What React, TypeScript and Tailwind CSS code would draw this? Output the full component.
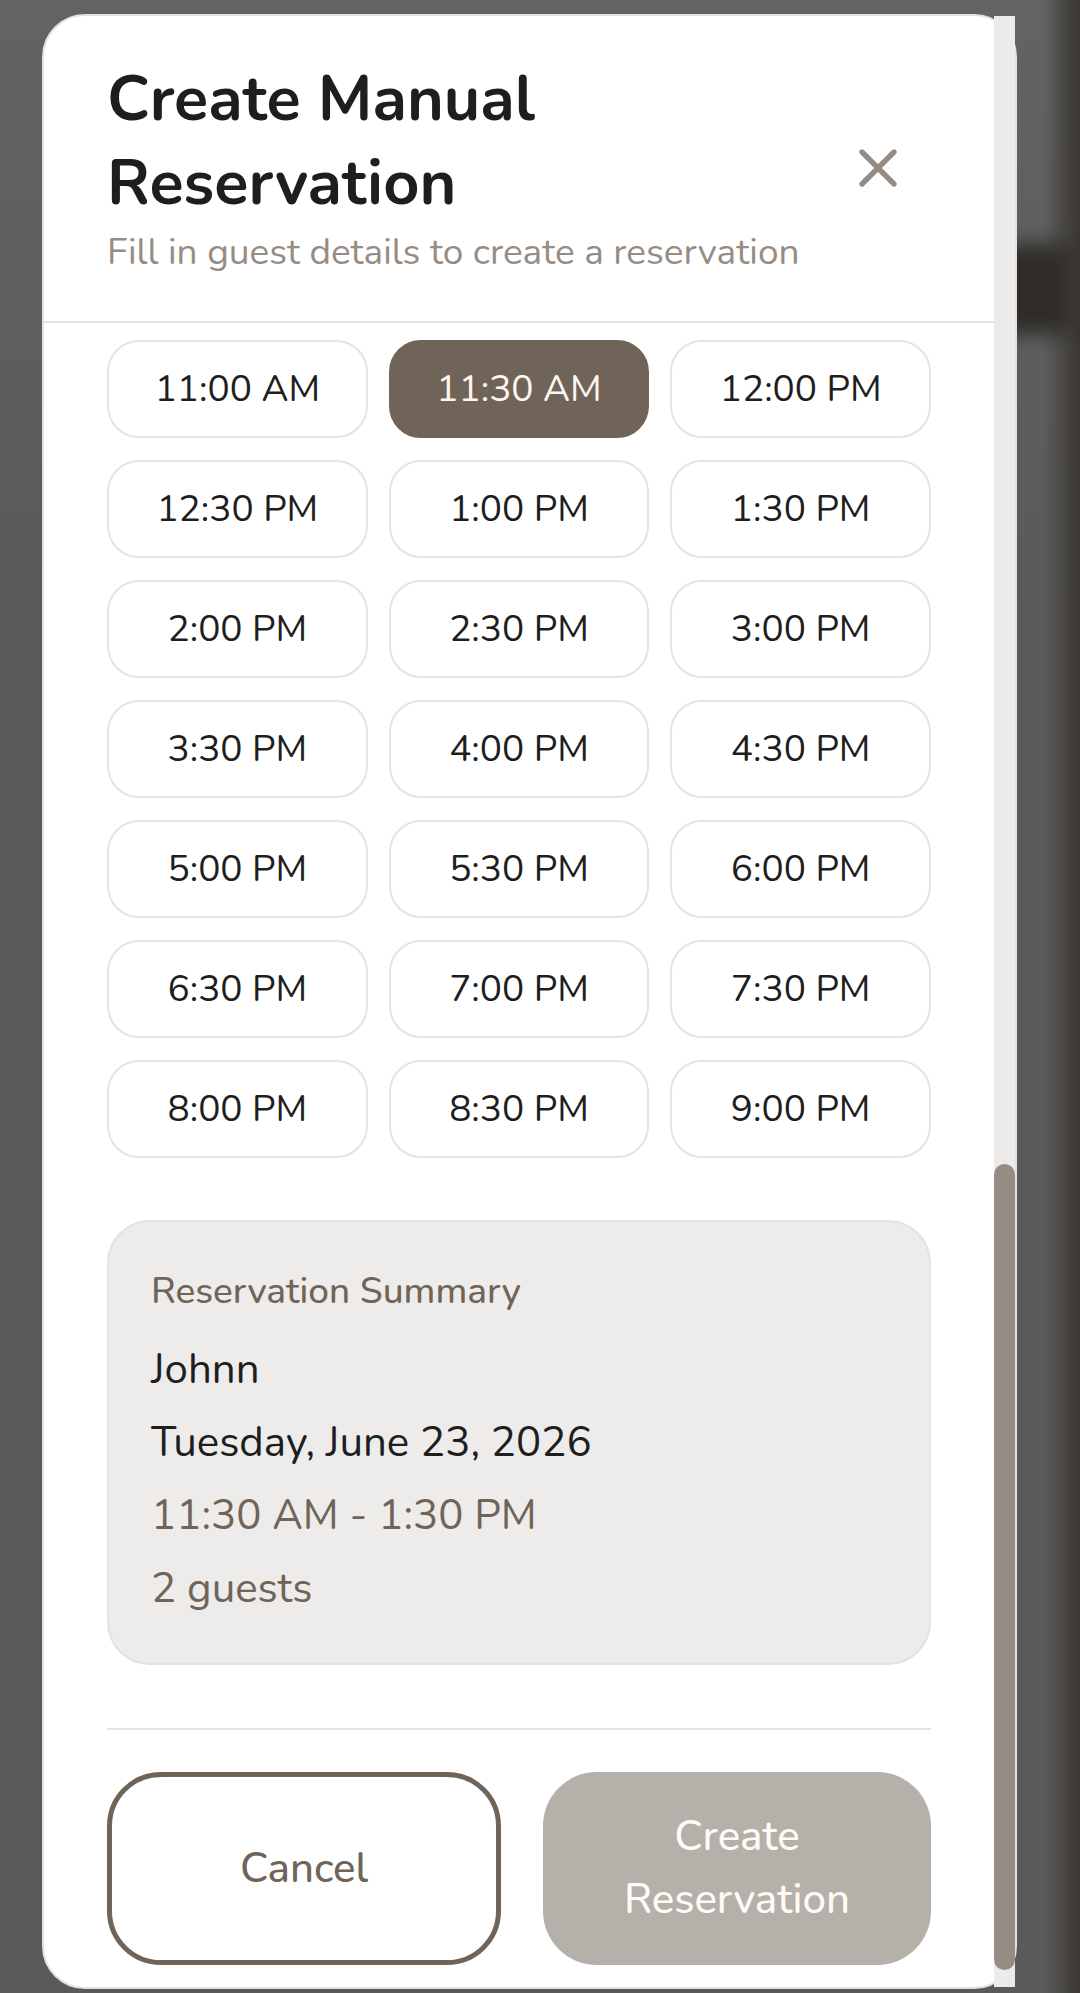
import React, { useState } from 'react';
import { X } from 'lucide-react';

const TIME_SLOTS = [
    '11:00 AM', '11:30 AM', '12:00 PM',
    '12:30 PM', '1:00 PM', '1:30 PM',
    '2:00 PM', '2:30 PM', '3:00 PM',
    '3:30 PM', '4:00 PM', '4:30 PM',
    '5:00 PM', '5:30 PM', '6:00 PM',
    '6:30 PM', '7:00 PM', '7:30 PM',
    '8:00 PM', '8:30 PM', '9:00 PM',
];

const ModalHeader: React.FC = () => (
    <header className="flex items-center justify-between border-b-2 border-[#e2e2e2] px-[63px] pt-[41px] pb-[43px]">
        <div>
            <h1 className="mb-[2px] max-w-[560px] text-[63px] leading-[84px] font-bold text-[#1e1e1e]">Create Manual Reservation</h1>
            <p className="text-[37px] leading-[51px] text-[#968c83]">Fill in guest details to create a reservation</p>
        </div>
        <button type="button" aria-label="Close" className="shrink-0 p-[21px] text-[#968c83]">
            <X size={64} strokeWidth={2} />
        </button>
    </header>
);

const TimeSlots: React.FC = () => {
    const [selected, setSelected] = useState('11:30 AM');

    return (
        <div className="grid grid-cols-3 gap-x-[21px] gap-y-[22px]">
            {TIME_SLOTS.map((slot) => (
                <button
                    key={slot}
                    type="button"
                    aria-pressed={slot === selected}
                    onClick={() => setSelected(slot)}
                    className={`h-[98px] rounded-[32px] border-2 text-[37px] leading-[53px] ${slot === selected ? 'border-[#706458] bg-[#706458] text-[#fdf5ef]' : 'border-[#e4e4e4] bg-white text-[#1e1e1e]'}`}
                >
                    {slot}
                </button>
            ))}
        </div>
    );
};

const Summary: React.FC = () => (
    <section className="mt-[62px] rounded-[43px] border-2 border-[#e2e2e2] bg-[#edecea] px-[42px] py-[43px] text-[42px] leading-[63px]">
        <h2 className="mb-[20px] text-[37px] leading-[53px] font-medium text-[#706458]">Reservation Summary</h2>
        <div className="flex flex-col gap-[10px]">
            <p className="text-[#1e1e1e]">Johnn</p>
            <p className="text-[#1e1e1e]">Tuesday, June 23, 2026</p>
            <p className="text-[#706458]">11:30 AM - 1:30 PM</p>
            <p className="text-[#706458]">2 guests</p>
        </div>
    </section>
);

const Scrollbar: React.FC = () => (
    <div className="flex w-[21px] shrink-0 flex-col justify-end bg-[#ecebe9] pb-[17px]">
        <div className="h-[806px] rounded-full bg-[#968c82]" />
    </div>
);

const App: React.FC = () => {
    return (
        <div className="relative min-h-screen overflow-hidden bg-[#5c5c5c] bg-linear-to-b from-[#636363] to-[#5a5a5a] to-30% pt-[14px] pr-[63px] pb-1 pl-[42px] font-['Nunito','Lato',sans-serif]">
            {/* blurred page edge behind the modal */}
            <div className="absolute inset-y-0 right-0 w-[36px] bg-linear-to-r from-[#4b4a45]/0 via-[#4b4a45] to-[#3b3632]" />
            <div className="absolute top-[244px] right-[8px] h-[90px] w-[100px] bg-[#2f2c28] blur-[10px]" />

            <div role="dialog" aria-label="Create Manual Reservation" className="relative flex rounded-[43px] border-2 border-[#e2e2e2] bg-white">
                <div className="min-w-0 flex-1">
                    <ModalHeader />
                    <div className="px-[63px] pt-[17px] pb-[22px]">
                        <TimeSlots />
                        <Summary />
                        <div className="mt-[63px] flex gap-[42px] border-t-2 border-[#e2e2e2] pt-[42px] text-[42px] leading-[63px] font-medium">
                            <button type="button" className="flex-1 rounded-[54px] border-[5px] border-[#706458] px-[41px] text-[#706458]">
                                Cancel
                            </button>
                            <button type="button" disabled className="flex-1 rounded-[54px] bg-[#b5b0aa] px-[43px] pt-[33px] pb-[34px] text-[#fffaf6]">
                                Create Reservation
                            </button>
                        </div>
                    </div>
                </div>
                <Scrollbar />
            </div>
        </div>
    );
};

export default App;
